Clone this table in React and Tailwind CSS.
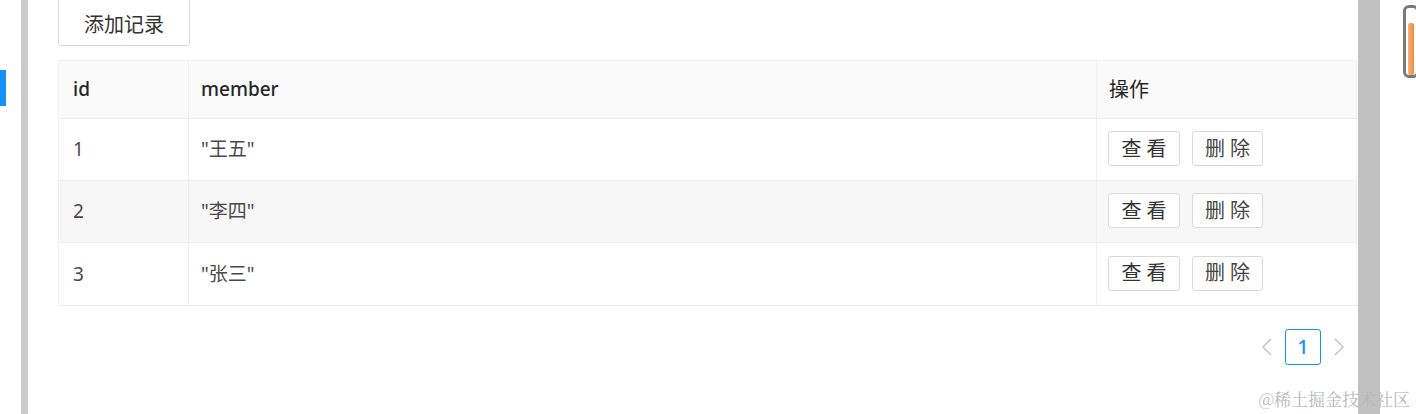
import React from 'react';

const rows = [
  { id: 1, member: '"王五"' },
  { id: 2, member: '"李四"' },
  { id: 3, member: '"张三"' },
];

const Chevron = ({ dir }) => (
  <svg width="12" height="20" viewBox="0 0 12 20" fill="none" className="block">
    {dir === 'left' ? (
      <path d="M10 2 L2 10 L10 18" stroke="#c0c0c0" strokeWidth="1.4" />
    ) : (
      <path d="M2 2 L10 10 L2 18" stroke="#c0c0c0" strokeWidth="1.4" />
    )}
  </svg>
);

const App = () => {
  return (
    <div className="relative flex h-[414px] w-[1416px] overflow-hidden bg-white font-['Noto_Sans','Noto_Sans_CJK_SC',sans-serif] text-[19px]">
      {/* 左侧菜单 */}
      <div className="w-[21px] shrink-0 bg-white pt-[70px]">
        <div className="h-[36px] w-[6px] bg-[#1890ff]"></div>
      </div>
      <div className="w-[7px] shrink-0 bg-[#cacaca]"></div>

      {/* 主内容 */}
      <div className="flex w-[1330px] shrink-0 flex-col pl-[30px] pr-[1px]">
        <div className="-mt-[2px]">
          <button className="flex h-[48px] w-[132px] items-center justify-center rounded-[3px] border border-[#d9d9d9] bg-white pt-[5px] text-[20px] text-[#333]">
            添加记录
          </button>
        </div>

        <div className="mt-[14px] border border-[#f0f0f0] border-b-[#ebebeb]">
          <div className="grid h-[58px] grid-cols-[129px_908px_1fr] bg-[#fafafa] text-[#262626] border-b border-[#ececec]">
            <div className="flex items-center pl-[14px] font-medium">id</div>
            <div className="flex items-center border-l border-[#eeeeee] pl-[12px] font-medium">member</div>
            <div className="flex items-center border-l border-[#eeeeee] pl-[12px] text-[20px]">操作</div>
          </div>
          {rows.map((row, i) => (
            <div
              key={row.id}
              className={`grid h-[62px] grid-cols-[129px_908px_1fr] text-[#4a4a4a] ${i === 1 ? 'bg-[#f7f7f7]' : 'bg-white'} ${i < rows.length - 1 ? 'border-b border-[#ececec]' : ''}`}
            >
              <div className="flex items-center pl-[14px]">{row.id}</div>
              <div className="flex items-center border-l border-[#eeeeee] pl-[12px]">{row.member}</div>
              <div className="flex items-center gap-[12px] border-l border-[#eeeeee] pl-[11px]">
                <button className="-mt-[2px] flex h-[35px] w-[72px] items-center justify-center rounded-[3px] border border-[#d9d9d9] bg-white text-[20px] text-[#333]">
                  查 看
                </button>
                <button className="-mt-[2px] flex h-[35px] w-[71px] items-center justify-center rounded-[3px] border border-[#d9d9d9] bg-white text-[20px] text-[#444]">
                  删 除
                </button>
              </div>
            </div>
          ))}
        </div>

        {/* 分页 */}
        <div className="mt-[23px] flex items-center justify-end gap-[12px] pr-[12px]">
          <Chevron dir="left" />
          <div className="flex h-[36px] w-[36px] items-center justify-center rounded-[3px] border border-[#1890ff] text-[20px] font-medium text-[#1890ff]">
            1
          </div>
          <Chevron dir="right" />
        </div>
      </div>

      <div className="w-[22px] shrink-0 bg-[#c1c1c1]"></div>

      {/* 右侧 */}
      <div className="flex flex-1 justify-end bg-white pt-[5px]">
        <div className="-mr-[3px] h-[73px] w-[16px] rounded-[6px] border-[3px] border-[#7a7a7a] bg-white px-[2px] pt-[15px]">
          <div className="h-full w-full rounded-[2px] bg-gradient-to-r from-[#f7b27c] to-[#f08a3c]"></div>
        </div>
      </div>

      {/* 水印 */}
      <div className="absolute bottom-[3px] right-[6px] font-['Noto_Serif_CJK_SC','Noto_Sans_CJK_SC',serif] text-[17px] text-[#b8b8b8]">
        @稀土掘金技术社区
      </div>
    </div>
  );
};

export default App;
